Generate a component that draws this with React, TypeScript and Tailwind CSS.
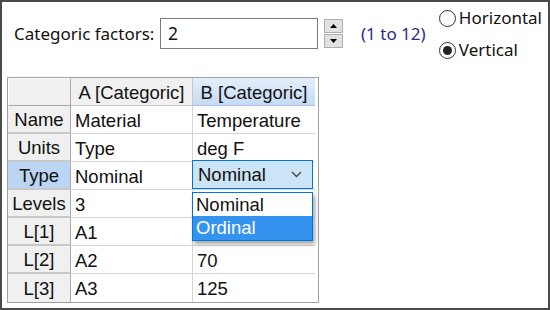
import React from "react";

const rows = [
  { label: "Name", a: "Material", b: "Temperature" },
  { label: "Units", a: "Type", b: "deg F" },
  { label: "Type", a: "Nominal", b: "" },
  { label: "Levels", a: "3", b: "" },
  { label: "L[1]", a: "A1", b: "" },
  { label: "L[2]", a: "A2", b: "70" },
  { label: "L[3]", a: "A3", b: "125" },
];

function Radio({ label, checked }: { label: string; checked?: boolean }) {
  return (
    <div className="flex items-center gap-[3px] h-[32px]">
      <span className="w-[17px] h-[17px] rounded-full border border-[#333] bg-white flex items-center justify-center">
        {checked && <span className="w-[9px] h-[9px] rounded-full bg-[#222]" />}
      </span>
      <span className="text-[17px] text-[#111]">{label}</span>
    </div>
  );
}

function Spinner() {
  return (
    <div className="flex flex-col gap-[1px] ml-[6px]">
      <div className="w-[19px] h-[14px] bg-[#e1e1e1] border border-[#adadad] flex items-center justify-center">
        <svg width="7" height="4" viewBox="0 0 7 4">
          <path d="M0 4 L3.5 0 L7 4 Z" fill="#000" />
        </svg>
      </div>
      <div className="w-[19px] h-[14px] bg-[#e1e1e1] border border-[#adadad] flex items-center justify-center">
        <svg width="7" height="4" viewBox="0 0 7 4">
          <path d="M0 0 L3.5 4 L7 0 Z" fill="#000" />
        </svg>
      </div>
    </div>
  );
}

export default function App() {
  return (
    <div
      className="w-[550px] h-[310px] border-2 border-[#4a4a4a] bg-white overflow-hidden"
      style={{ fontFamily: "'Segoe UI', 'Noto Sans', sans-serif" }}
    >
      <div className="flex items-start h-[75px]">
        <div className="flex items-center pl-[12px] pt-[16px] h-[47px]">
          <span className="text-[17px] text-[#111] w-[146px]">Categoric factors:</span>
          <div className="w-[158px] h-[31px] border border-[#7a7a7a] bg-white flex items-center pl-[7px] text-[17.5px] text-[#111]">
            2
          </div>
          <Spinner />
          <span className="ml-[18px] text-[17px] text-[#2b2b8a]">(1 to 12)</span>
        </div>
        <div className="ml-auto mr-[6px] flex flex-col">
          <Radio label="Horizontal" />
          <Radio label="Vertical" checked />
        </div>
      </div>

      <div
        className="ml-[5px] w-[312px] border border-[#a0a0a0]"
        style={{ fontFamily: "'Liberation Sans', Arial, sans-serif" }}
      >
        <div className="grid grid-cols-[63px_122px_122px] text-[18.5px] text-[#111]">
          <div className="h-[28px] bg-[#f0f0f0] border-r border-b border-[#a8a8a8] border-t border-t-white border-l border-l-white" />
          <div className="h-[28px] pt-[2px] bg-[#f0f0f0] border-r border-b border-[#c8c8c8] flex items-center justify-center">
            A [Categoric]
          </div>
          <div className="h-[28px] pt-[2px] bg-gradient-to-b from-[#e4eefb] to-[#c6dbf5] border-b border-[#a8c4e8] flex items-center justify-center">
            B [Categoric]
          </div>

          {rows.map((r, i) => {
            const hl = r.label === "Type";
            const last = i === rows.length - 1;
            return (
              <React.Fragment key={r.label}>
                <div
                  className={
                    "h-[28px] pt-[2px] border-r border-[#a8a8a8] flex items-center justify-center " +
                    (last ? "" : "border-b-2 border-b-[#c8c8c8] ") +
                    (hl ? "bg-[#bcd5f5]" : "bg-[#f0f0f0]")
                  }
                >
                  {r.label}
                </div>
                <div
                  className={
                    "h-[28px] pt-[2px] border-r border-[#d4d4d4] flex items-center pl-[4px] " +
                    (last ? "" : "border-b")
                  }
                >
                  {r.a}
                </div>
                <div
                  className={
                    "h-[28px] pt-[2px] border-[#d4d4d4] flex items-center pl-[4px] relative " +
                    (last ? "" : "border-b")
                  }
                >
                  {r.b}
                  {hl && (
                    <>
                      <div className="absolute left-[-1px] top-[-2px] w-[121px] h-[29px] bg-[#cce4f7] border border-[#0078d7] flex items-center pl-[5px] pr-[10px] justify-between z-10">
                        <span>Nominal</span>
                        <svg width="11" height="7" viewBox="0 0 11 7">
                          <path d="M1 1 L5.5 5.5 L10 1" fill="none" stroke="#444" strokeWidth="1.3" />
                        </svg>
                      </div>
                      <div className="absolute left-[-1px] top-[30px] w-[121px] bg-white border border-[#0078d7] z-20 shadow-[2px_3px_4px_rgba(0,0,0,0.35)]">
                        <div className="h-[23px] flex items-center pl-[3px] text-[#111]">Nominal</div>
                        <div className="h-[24px] flex items-center pl-[3px] bg-[#3393ee] text-white">Ordinal</div>
                      </div>
                    </>
                  )}
                </div>
              </React.Fragment>
            );
          })}
        </div>
      </div>
    </div>
  );
}
